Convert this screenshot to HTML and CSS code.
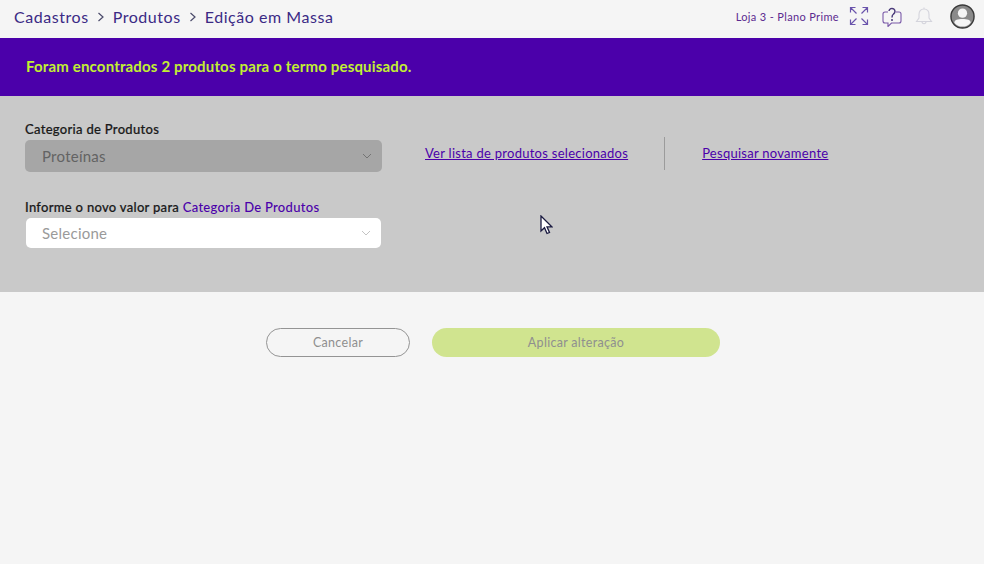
FILE: index.html
```html
<!DOCTYPE html>
<html lang="pt-BR">
<head>
<meta charset="utf-8">
<title>Edição em Massa</title>
<link rel="stylesheet" href="styles.css">
</head>
<body>
<header class="topbar">
  <nav class="crumbs">
    <span>Cadastros</span>
    <svg class="chev" viewBox="0 0 8 10"><path d="M1.500 1 L6 5 L1.500 9"/></svg>
    <span>Produtos</span>
    <svg class="chev" viewBox="0 0 8 10"><path d="M1.500 1 L6 5 L1.500 9"/></svg>
    <span>Edição em Massa</span>
  </nav>
  <div class="tools">
    <span class="store">Loja 3 - Plano Prime</span>
    <svg class="ic-expand" viewBox="0 0 20 20"><path d="M1.500 6.500V1.500H6.500M1.500 1.500L7.500 7.500M13.500 1.500H18.500V6.500M18.500 1.500L12.500 7.500M1.500 13.500V18.500H6.500M1.500 18.500L7.500 12.500M13.500 18.500H18.500V13.500M18.500 18.500L12.500 12.500"/></svg>
    <svg class="ic-help" viewBox="0 0 20 20"><path d="M6 5H3A2 2 0 0 0 1 7V14A2 2 0 0 0 3 16H6V19.500L9.500 16H17A2 2 0 0 0 19 14V7A2 2 0 0 0 17 5H14"/><path class="q" d="M7 4A3 3 0 1 1 11.500 7C10.300 7.800 10 8.500 10 10.500M10 12V14"/></svg>
    <svg class="ic-bell" viewBox="0 0 20 20"><path d="M10 1.500V3M10 3C6.500 3 5 5.500 5 8.500V12L2.500 15.500H17.500L15 12V8.500C15 5.500 13.500 3 10 3ZM8 15.500C8 18.500 12 18.500 12 15.500"/></svg>
    <svg class="avatar" viewBox="0 0 26 26"><circle cx="13" cy="13" r="12" class="av-bg"/><circle cx="13" cy="9.500" r="4.800" class="av-fg"/><path class="av-fg" d="M4.500 19.500C4.500 16.500 8 15.500 13 15.500S21.500 16.500 21.500 19.500C19.500 22.500 16 23.500 13 23.500S6.500 22.500 4.500 19.500Z"/></svg>
  </div>
</header>

<section class="banner">Foram encontrados 2 produtos para o termo pesquisado.</section>

<section class="panel">
  <div class="fields">
    <div class="field">
      <label class="label">Categoria de Produtos</label>
      <div class="select select-disabled">
        <span>Proteínas</span>
        <svg class="caret" viewBox="0 0 10 6"><path d="M1 1L5 5L9 1"/></svg>
      </div>
    </div>
    <div class="field">
      <label class="label">Informe o novo valor para <span class="accent">Categoria De Produtos</span></label>
      <div class="select select-open">
        <span>Selecione</span>
        <svg class="caret" viewBox="0 0 10 6"><path d="M1 1L5 5L9 1"/></svg>
      </div>
    </div>
  </div>
  <div class="links">
    <a class="link" href="#">Ver lista de produtos selecionados</a>
    <span class="divider"></span>
    <a class="link" href="#">Pesquisar novamente</a>
  </div>
  <svg class="cursor" viewBox="0 0 13 20"><path d="M1 1V16L4.500 12.700L7 18.500L9.500 17.500L7 11.800H11.800Z"/></svg>
</section>

<div class="actions">
  <button class="btn btn-cancel">Cancelar</button>
  <button class="btn btn-apply">Aplicar alteração</button>
</div>
</body>
</html>
```
FILE: styles.css
```css
* { box-sizing: border-box; }
html, body { margin: 0; height: 100%; }
body {
  background: #f5f5f5;
  font-family: "Lato", "Open Sans", sans-serif;
  color: #222;
  overflow: hidden;
}
.topbar {
  height: 38px;
  display: flex;
  align-items: center;
  justify-content: space-between;
  padding: 0 9px 6px 14px;
}
.crumbs {
  display: flex;
  align-items: center;
  gap: 8px;
  font-size: 16px;
  letter-spacing: 0.55px;
  color: #3b2a85;
}
.chev { width: 8px; height: 10px; margin-top: 2px; }
.chev path { fill: none; stroke: #4a4a6a; stroke-width: 1.2; }
.tools { display: flex; align-items: center; }
.store { font-size: 11px; letter-spacing: 0.35px; color: #5b2a90; margin-right: 10px; }
.tools svg path { fill: none; }
.ic-expand { width: 20px; height: 20px; margin-right: 13px; }
.ic-expand path { stroke: #6a54ac; stroke-width: 1.2; }
.ic-help { width: 20px; height: 20px; margin-right: 12px; margin-top: 2px; }
.ic-help path { stroke: #7a5aa8; stroke-width: 1.100; }
.ic-help .q { stroke: #4a3a7a; stroke-width: 1.500; }
.ic-bell { width: 20px; height: 20px; margin-right: 16px; }
.ic-bell path { stroke: #d4d4dc; stroke-width: 1.100; }
.avatar { width: 25px; height: 25px; }
.av-bg { fill: #8a8a8a; stroke: #3a3a3a; stroke-width: 1.500; }
.tools .av-fg { fill: #f5f5f5; }
.banner {
  height: 58px;
  background: #4b00aa;
  color: #c2f032;
  font-weight: 700;
  font-size: 15px;
  display: flex;
  align-items: center;
  padding: 0 0 3px 26px;
  letter-spacing: 0.17px;
}
.panel {
  position: relative;
  height: 196px;
  background: #c9c9c9;
  padding: 26px 25px 0;
  display: flex;
}
.fields { width: 357px; display: flex; flex-direction: column; gap: 28px; }
.field { display: flex; flex-direction: column; }
.label { font-size: 13px; font-weight: 500; color: #1a1a1a; height: 18px; line-height: 14px; letter-spacing: 0.3px; -webkit-text-stroke: 0.2px #1a1a1a; }
.accent { color: #4b00aa; -webkit-text-stroke: 0; }
.select {
  height: 32px;
  border-radius: 5px;
  display: flex;
  align-items: center;
  justify-content: space-between;
  padding: 0 10px 0 17px;
  font-size: 15px;
  letter-spacing: 0.25px;
}
.select-disabled { background: #a6a6a6; color: #636363; }
.select-open { background: #fff; color: #9a9a9a; height: 30px; margin: 0 1px; padding-left: 16px; }
.caret { width: 10px; height: 6px; }
.caret path { fill: none; stroke: #747474; stroke-width: 1; }
.select-open .caret path { stroke: #c4c4c4; }
.links { display: flex; align-items: center; height: 32px; margin-top: 15px; margin-left: 43px; }
.link { font-size: 13px; color: #4b00aa; letter-spacing: 0.27px; }
.divider { width: 1px; height: 33px; background: #9b9b9b; margin: 0 37px 0 36px; }
.cursor { position: absolute; left: 540px; top: 119px; width: 13px; height: 20px; }
.cursor path { fill: #fff; stroke: #1a1a40; stroke-width: 1.300; }
.actions { display: flex; justify-content: center; gap: 22px; padding: 36px 0 0 2px; }
.btn {
  height: 29px;
  border-radius: 15px;
  font-family: inherit;
  font-size: 12.500px;
  letter-spacing: 0.3px;
  padding: 0;
  color: #8f8f8f;
}
.btn-cancel { width: 144px; background: transparent; border: 1px solid #949494; }
.btn-apply { width: 288px; background: #d0e48f; border: none; }
```
